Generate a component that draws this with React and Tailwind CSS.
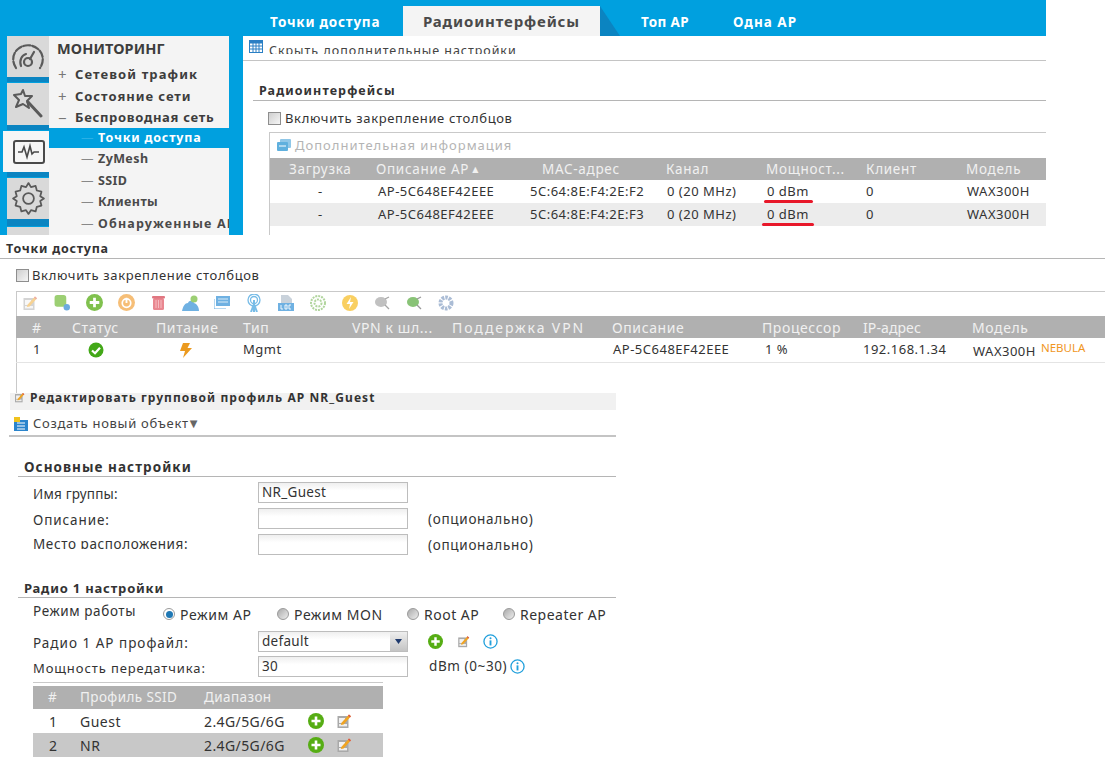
import React from "react";

const Plus = ({ s = 16 }) => (
  <svg width={s} height={s} viewBox="0 0 16 16" className="shrink-0"><circle cx="8" cy="8" r="8" fill="#56ad14" /><path d="M8 3.5v9M3.5 8h9" stroke="#fff" strokeWidth="2.6" /></svg>
);
const Edit = ({ s = 16, muted }) => (
  <svg width={s} height={s} viewBox="0 0 16 16" className="shrink-0" opacity={muted ? 0.65 : 1}><rect x="1.5" y="3" width="11" height="12" fill="#a9a9a9" /><rect x="3" y="11" width="8" height="2.4" fill="#eee" /><rect x="3" y="5" width="6" height="5" fill="#f2f2f2" /><path d="M5.5 9.8 13 1.5l2 1.8-7.4 8.2-2.8.6z" fill="#f0a422" /><path d="M13 1.5l2 1.8-1 1.1-2-1.8z" fill="#d9534f" /></svg>
);
const Info = ({ s = 16 }) => (
  <svg width={s} height={s} viewBox="0 0 16 16" className="shrink-0"><circle cx="8" cy="8" r="7" fill="#fff" stroke="#22a0dc" strokeWidth="1.4" /><circle cx="8" cy="4.6" r="1.1" fill="#22a0dc" /><path d="M8 6.8v5.4" stroke="#22a0dc" strokeWidth="2" /></svg>
);
const GridIcon = () => (
  <svg width="14" height="13" viewBox="0 0 14 13" className="shrink-0"><rect x=".5" y=".5" width="13" height="12" fill="#fff" stroke="#2a7fc4" /><rect x=".5" y=".5" width="13" height="3" fill="#2a7fc4" /><path d="M4 3v9M7 3v9M10 3v9M1 6h12M1 9h12" stroke="#2a7fc4" /></svg>
);
const Check = () => (
  <div className="w-[13px] h-[13px] border border-[#8e8e8e] bg-[linear-gradient(135deg,#cfcfcf,#f6f6f6)] shrink-0" />
);
const Radio = ({ on }) => (
  <span className={`w-[12px] h-[12px] rounded-full border border-[#9a9a9a] shrink-0 flex items-center justify-center ${on ? "bg-white" : "bg-[linear-gradient(135deg,#aaa,#eee)]"}`}>
    {on && <span className="w-[7px] h-[7px] rounded-full bg-[#1f78b4]" />}
  </span>
);

const GaugeI = () => (
  <svg width="34" height="30" viewBox="0 0 34 30" fill="none" stroke="#5a5a5a" strokeWidth="2.2" strokeLinecap="round"><path d="M5 26C1 20 1 12 7 7c6-5 14-5 20 0 6 5 6 13 2 19" strokeDasharray="7 2" /><circle cx="17" cy="20" r="4" /><path d="M19 17l4-7M10 24c-2-6 1-11 5-12" /></svg>
);
const WandI = () => (
  <svg width="30" height="32" viewBox="0 0 30 32" fill="none" stroke="#5a5a5a" strokeWidth="2" strokeLinejoin="round" strokeLinecap="round"><path d="M10 2l2 6 7 0-5 5 2 7-6-4-7 3 3-7-5-5 7-1z" /><path d="M15 14l13 14" strokeWidth="3" /></svg>
);
const PulseI = () => (
  <svg width="32" height="24" viewBox="0 0 32 24" fill="none" stroke="#4a4a4a"><rect x="1" y="1" width="30" height="22" rx="2" strokeWidth="2" /><path d="M5 12h4l2-5 3 10 3-11 2 8 2-2h5" strokeWidth="1.6" /></svg>
);
const GearI = () => (
  <svg width="37" height="37" viewBox="0 0 24 24" fill="none" stroke="#5a5a5a" strokeWidth="1.15" strokeLinejoin="round"><circle cx="12" cy="12" r="3.5" /><path d="M12 2l1.6 2.6 3-.8.8 3 3 .8-.8 3L22 12l-2.4 1.6.8 3-3 .8-.8 3-3-.8L12 22l-1.6-2.4-3 .8-.8-3-3-.8.8-3L2 12l2.4-1.4-.8-3 3-.8.8-3 3 .8z" /></svg>
);

const SideItem = ({ children, active, h = 41, sh = 5 }) => (
  <div className="flex flex-col items-end">
    <div className={`flex items-center justify-center ${active ? "w-[46px] pl-[6px] bg-[#f6f6f6]" : "w-[42px] bg-[#d9d9d9]"}`} style={{ height: h }}>{children}</div>
    <div className="w-[42px] bg-[#0b84c1]" style={{ height: sh }} />
  </div>
);

const MenuRow = ({ sign, children, className = "tracking-[0.45px] h-[21.5px]" }) => (
  <div className={`flex items-center text-[13px] font-bold text-[#3d3d3d] ${className}`}>
    <span className="w-[26px] shrink-0 pl-[9px] text-[#777] font-normal text-[15px] leading-none">{sign}</span>
    <span className="whitespace-nowrap">{children}</span>
  </div>
);
const SubRow = ({ children, active, trk = "tracking-[0.4px]" }) => (
  <div className={`flex items-center text-[12.5px] font-bold whitespace-nowrap ${trk} ${active ? "bg-[#00a0df] text-white h-[20px] pt-[1px]" : "text-[#4a4a4a] h-[21.5px] pt-[2px]"}`}>
    <span className={`w-[49px] shrink-0 pl-[32px] font-normal tracking-[0px] ${active ? "text-[#2ab0e6]" : "text-[#888]"}`}>—</span>
    <span>{children}</span>
  </div>
);

const radioCols = "grid-cols-[106px_166px_124px_100px_100px_100px_81px]";
const accessCols = "grid-cols-[56px_84px_87px_109px_100px_160px_150px_101px_109px_133px]";

const RadioRow = ({ mac, bar, shade }) => (
  <div className={`grid ${radioCols} h-[23px] items-center text-[13px] tracking-[0.5px] text-[#333] ${shade ? "bg-[#ececec]" : "bg-white"}`}>
    <span className="pl-[48px]">-</span>
    <span className="pl-[2px] whitespace-nowrap">AP-5C648EF42EEE</span>
    <span className="ml-[-12px] whitespace-nowrap">{mac}</span>
    <span className="pl-[1px] whitespace-nowrap">0 (20 MHz)</span>
    <span className="relative pl-[1px]">0 dBm<span className={`absolute top-[18px] h-[3px] rounded-full bg-[#e8182a] ${bar}`} /></span>
    <span>0</span>
    <span className="pl-[1px]">WAX300H</span>
  </div>
);

const ToolIcons = () => {
  const wrap = (k, el) => <span key={k} className="shrink-0 flex justify-center w-[32px]">{el}</span>;
  return (
    <div className="flex items-center h-[24px] ml-[-3px] pb-[3px] opacity-75">
      {wrap(1, <Edit s={16} muted />)}
      {wrap(2, <svg width="18" height="17" viewBox="0 0 16 16"><rect x="1" y="1" width="11" height="11" rx="2.5" fill="#7cc045" /><circle cx="12.5" cy="12.5" r="3" fill="#3b8fd6" /></svg>)}
      {wrap(3, <Plus s={17} />)}
      {wrap(4, <svg width="17" height="17" viewBox="0 0 16 16"><circle cx="8" cy="8" r="8" fill="#f3a94a" /><circle cx="8" cy="8.5" r="4" fill="none" stroke="#fff" strokeWidth="1.6" /><path d="M8 3.5v5" stroke="#fff" strokeWidth="1.8" /></svg>)}
      {wrap(5, <svg width="13" height="15" viewBox="0 0 13 15"><rect x="1" y="3" width="11" height="12" rx="1.5" fill="#e2606c" /><rect y="1" width="13" height="2.5" rx="1" fill="#d64a58" /><path d="M4 5v8M6.5 5v8M9 5v8" stroke="#f3a5ad" /></svg>)}
      {wrap(6, <svg width="17" height="16" viewBox="0 0 17 16"><path d="M0 16c1-5 3-8 6-8 1-3 5-3 6 0 3 1 5 4 5 8z" fill="#3f97d9" /><circle cx="12" cy="4" r="3.5" fill="#7cc045" /></svg>)}
      {wrap(7, <svg width="16" height="13" viewBox="0 0 16 13"><rect x="2" width="14" height="10" fill="#3f97d9" /><path d="M0 3v10h12" fill="none" stroke="#3f97d9" /><path d="M4 3h10M4 6h10" stroke="#cfe6f7" /></svg>)}
      {wrap(8, <svg width="14" height="18" viewBox="0 0 14 18" fill="none" stroke="#4aa6e0" strokeWidth="1.3"><circle cx="7" cy="6" r="6" /><circle cx="7" cy="6" r="3.5" /><path d="M7 6v12M4 18l3-8 3 8" strokeWidth="2" /></svg>)}
      {wrap(9, <svg width="16" height="16" viewBox="0 0 16 16"><path d="M3 0h7l4 4v4H3z" fill="#b8c4cf" /><rect y="8" width="16" height="8" fill="#3f97d9" /><path d="M3 10v4h2M7 10h2v4H7zM13 10h-2v4h2" stroke="#fff" fill="none" strokeWidth=".9" /></svg>)}
      {wrap(10, <svg width="16" height="16" viewBox="0 0 16 16" fill="none" stroke="#97c77d" strokeWidth="2" strokeDasharray="2 1"><circle cx="8" cy="8" r="7" /><circle cx="8" cy="8" r="3.5" /></svg>)}
      {wrap(11, <svg width="16" height="16" viewBox="0 0 16 16"><circle cx="8" cy="8" r="8" fill="#f8c02d" /><path d="M9 2 4.5 9H8l-1 5 4.5-7H8z" fill="#fff" /></svg>)}
      {wrap(12, <svg width="15" height="14" viewBox="0 0 15 14"><ellipse cx="6" cy="6" rx="6" ry="5" fill="#adadad" /><path d="M10 9l4 4M10 3l4-2" stroke="#888" strokeWidth="1.3" /></svg>)}
      {wrap(13, <svg width="15" height="14" viewBox="0 0 15 14"><ellipse cx="6" cy="6" rx="6" ry="5" fill="#62b04a" /><path d="M10 9l4 4M10 3l4-2" stroke="#777" strokeWidth="1.3" /></svg>)}
      {wrap(14, <svg width="16" height="16" viewBox="0 0 16 16" fill="none"><circle cx="8" cy="8" r="5.5" stroke="#8ea6c8" strokeWidth="4" strokeDasharray="2.5 1" /></svg>)}
    </div>
  );
};

const Section = ({ children, className = "" }) => (
  <div className={`font-bold text-[#333] whitespace-nowrap border-b border-[#b5b5b5] ${className}`}>{children}</div>
);
const Field = ({ value }) => (
  <div className="w-[150px] h-[21px] border border-[#bdbdbd] bg-[linear-gradient(#efefef,#fff_40%)] px-[3px] text-[13.5px] tracking-[0.3px] leading-[19px] text-[#333] shrink-0">{value}</div>
);
const FormRow = ({ label, children, h = 21, clip, trk = "text-[13.5px] tracking-[0.2px]" }) => (
  <div className="flex items-center pl-[33px]" style={{ height: h }}>
    <span className={`w-[225px] text-[#333] whitespace-nowrap ${trk} ${clip ? "h-[13px] mt-[-4px] overflow-hidden leading-[17px]" : "pt-[4px]"}`}>{label}</span>
    {children}
  </div>
);
const Opt = () => <span className="ml-[20px] pt-[2px] text-[13.5px] text-[#333] tracking-[0.7px]">(опционально)</span>;
const RadioOpt = ({ on, children, className = "" }) => (
  <div className={`flex items-center gap-[5px] text-[14px] text-[#333] whitespace-nowrap ${className}`}><Radio on={on} /><span>{children}</span></div>
);
const SsidRow = ({ n, name, shade }) => (
  <div className={`grid grid-cols-[47px_124px_104px_28px_47px] h-[24px] items-center text-[14px] text-[#333] ${shade ? "bg-[#c8c8c8]" : "bg-white"}`}>
    <span className="pl-[16px]">{n}</span><span className="tracking-[0.5px]">{name}</span><span className="whitespace-nowrap tracking-[0.4px]">2.4G/5G/6G</span>
    <Plus s={16} /><Edit s={16} />
  </div>
);

export default function App() {
  return (
    <div className="w-[1105px] h-[760px] overflow-hidden bg-white font-['Noto_Sans','DejaVu_Sans',sans-serif]">
      {/* Monitor: radio interfaces */}
      <div className="w-[1046px] h-[235px] overflow-hidden bg-[#00a0df] flex flex-col">
        <div className="h-[36px] flex items-end shrink-0 font-bold text-white text-[13.5px]">
          <div className="w-[403px] pl-[270px] h-[30px] leading-[33px] tracking-[0.75px]">Точки доступа</div>
          <div className="w-[197px] h-[30px] bg-[#f4f4f4] text-[#4a4a4a] text-[15px] text-center leading-[30px] tracking-[0.85px]">Радиоинтерфейсы</div>
          <div className="w-[20px] h-[30px] bg-[#0b84c1] [clip-path:polygon(0_0,100%_100%,0_100%)]" />
          <div className="ml-[21px] w-[92px] h-[30px] leading-[33px] tracking-[0.4px]">Топ AP</div>
          <div className="h-[30px] leading-[33px] tracking-[1px]">Одна AP</div>
        </div>
        <div className="flex flex-1 min-h-0">
          <div className="w-[49px] shrink-0 flex flex-col gap-[1px]">
            <SideItem><GaugeI /></SideItem>
            <SideItem h={42}><WandI /></SideItem>
            <SideItem active><PulseI /></SideItem>
            <SideItem sh={7}><GearI /></SideItem>
            <SideItem h={20} sh={0}><span /></SideItem>
          </div>
          <div className="w-[180px] shrink-0 bg-[#f4f4f4] overflow-hidden">
            <div className="h-[29px] pl-[8px] pb-[3px] flex items-center text-[14.5px] font-bold text-[#3d3d3d] tracking-[0.1px]">МОНИТОРИНГ</div>
            <MenuRow sign="+" className="h-[21.5px] pb-[2px] tracking-[1.1px]">Сетевой трафик</MenuRow>
            <MenuRow sign="+" className="h-[21.5px] pb-[2px] tracking-[0.95px]">Состояние сети</MenuRow>
            <MenuRow sign="−" className="h-[20px] tracking-[0.7px]">Беспроводная сеть</MenuRow>
            <SubRow active trk="tracking-[0.8px]">Точки доступа</SubRow>
            <SubRow>ZyMesh</SubRow>
            <SubRow>SSID</SubRow>
            <SubRow>Клиенты</SubRow>
            <SubRow trk="tracking-[1.2px]">Обнаруженные AP</SubRow>
          </div>
          <div className="ml-[14px] flex-1 bg-white min-w-0">
            <div className="h-[25px] border-b border-[#c4c4c4] flex items-start gap-[6px] pl-[6px] pt-[4px] overflow-hidden">
              <GridIcon />
              <span className="text-[12.5px] leading-[22px] h-[14px] overflow-hidden text-[#444] tracking-[0.95px] whitespace-nowrap">Скрыть дополнительные настройки</span>
            </div>
            <div className="mt-[21px] ml-[10px] h-[19px] border-b border-[#b5b5b5] pl-[6px] font-bold text-[12.5px] leading-[17px] text-[#333] tracking-[1.1px]">Радиоинтерфейсы</div>
            <div className="flex items-center gap-[4px] h-[27px] pl-[25px] mt-[4px] text-[13px] text-[#333] tracking-[0.65px]"><Check /><span>Включить закрепление столбцов</span></div>
            <div className="ml-[26px] border-l border-t border-[#c9c9c9] h-[120px]">
              <div className="h-[25px] flex items-center pl-[7px] gap-[4px] text-[13px] text-[#b4b4b4] tracking-[1px]">
                <svg width="14" height="13" viewBox="0 0 14 13"><rect x="3" y="0" width="11" height="9" rx="1" fill="#8fc7e8" /><rect x="0" y="3" width="11" height="9" rx="1" fill="#5fb0de" /><path d="M2 7h7" stroke="#fff" /></svg>
                <span>Дополнительная информация</span>
              </div>
              <div className={`grid ${radioCols} h-[22px] items-center bg-[#b0b0b0] text-[13.5px] text-[#f1f1f1] tracking-[0.7px] whitespace-nowrap`}>
                <span className="pl-[19px]">Загрузка</span>
                <span className="flex items-center gap-[3px]">Описание AP<span className="text-[8px]">▲</span></span>
                <span>MAC-адрес</span><span>Канал</span><span>Мощност...</span><span>Клиент</span><span>Модель</span>
              </div>
              <RadioRow mac="5C:64:8E:F4:2E:F2" bar="left-[-2px] w-[49px]" />
              <RadioRow mac="5C:64:8E:F4:2E:F3" bar="left-[-4px] w-[52px]" shade />
            </div>
          </div>
        </div>
      </div>

      {/* Access points */}
      <div className="h-[158px] pt-[6px] overflow-hidden">
        <Section className="h-[18px] pl-[6px] leading-[15px] text-[12.5px] tracking-[0.75px]">Точки доступа</Section>
        <div className="flex items-center gap-[3px] h-[25px] pl-[16px] mt-[4px] text-[13px] text-[#333] tracking-[0.65px]"><Check /><span>Включить закрепление столбцов</span></div>
        <div className="ml-[16px] mt-[3px] border-l border-t border-[#c9c9c9] h-[110px]">
          <ToolIcons />
          <div className={`grid ${accessCols} ml-[-1px] h-[22px] items-center bg-[#b0b0b0] text-[14px] text-[#f1f1f1] tracking-[0.6px] whitespace-nowrap`}>
            <span className="pl-[16px]">#</span><span>Статус</span><span>Питание</span><span>Тип</span><span>VPN к шл...</span><span className="tracking-[1.9px]">Поддержка VPN</span><span>Описание</span><span>Процессор</span><span className="tracking-[0.1px]">IP-адрес</span><span>Модель</span>
          </div>
          <div className={`grid ${accessCols} ml-[-1px] h-[25px] items-center border-b border-[#e4e4e4] text-[13px] tracking-[0.5px] text-[#333] whitespace-nowrap`}>
            <span className="pl-[17px]">1</span>
            <span className="pl-[16px]"><svg width="16" height="16" viewBox="0 0 16 16"><circle cx="8" cy="8" r="7.5" fill="#43a818" /><path d="M4 8.5l3 2.8 5-5.6" fill="none" stroke="#fff" strokeWidth="2.2" /></svg></span>
            <span className="pl-[24px]"><svg width="12" height="15" viewBox="0 0 12 15"><path d="M3 0h7L7.5 5H12L3 15l2-7H0z" fill="#eb9a1f" /></svg></span>
            <span>Mgmt</span><span /><span />
            <span className="pl-[1px]">AP-5C648EF42EEE</span><span className="pl-[3px]">1 %</span><span>192.168.1.34</span>
            <span className="flex items-start"><span className="pt-[3px] pl-[1px]">WAX300H</span><span className="text-[11.5px] tracking-[0px] text-[#f0961e] ml-[5px]">NEBULA</span></span>
          </div>
        </div>
      </div>

      {/* Edit group profile */}
      <div className="w-[616px]">
        <div className="ml-[10px] h-[17px] bg-[#f1f1f1] flex items-center gap-[5px] pl-[4px] pb-[8px] font-bold text-[12px] text-[#333] tracking-[1.07px] whitespace-nowrap">
          <Edit s={11} /><span>Редактировать групповой профиль AP NR_Guest</span>
        </div>
        <div className="ml-[9px] h-[27px] pt-[2px] border-b-2 border-[#c4c4c4] flex items-center pl-[5px] gap-[5px] text-[13px] text-[#444] tracking-[0.7px]">
          <svg width="14" height="14" viewBox="0 0 14 14"><rect y="3" width="14" height="11" fill="#2a84cc" /><path d="M3 6h8M3 9h8M3 12h8" stroke="#fff" /><rect width="6" height="5" fill="#f0c21d" /></svg>
          <span>Создать новый объект</span><span className="text-[10px] text-[#666] ml-[-4px]">▼</span>
        </div>
        <Section className="ml-[18px] mt-[23px] h-[17px] pl-[6px] leading-[15px] text-[13.5px] tracking-[1.05px]">Основные настройки</Section>
        <div className="mt-[5px]">
          <FormRow label="Имя группы:"><Field value="NR_Guest" /></FormRow>
          <div className="h-[5px]" />
          <FormRow label="Описание:" trk="text-[13.5px] tracking-[0.9px]"><Field /><Opt /></FormRow>
          <div className="h-[5px]" />
          <FormRow label="Место расположения:" clip trk="text-[13.5px] tracking-[0.6px]"><Field /><Opt /></FormRow>
        </div>
        <Section className="ml-[18px] mt-[26px] h-[17px] pl-[6px] leading-[15px] text-[13px] tracking-[0.8px]">Радио 1 настройки</Section>
        <div className="flex items-center h-[30px] pl-[33px] pt-[2px]">
          <span className="w-[130px] text-[13.5px] text-[#333] tracking-[0.6px] mt-[-5px]">Режим работы</span>
          <RadioOpt on className="w-[114px] tracking-[0.6px]">Режим AP</RadioOpt>
          <RadioOpt className="w-[130px] tracking-[0.55px]">Режим MON</RadioOpt>
          <RadioOpt className="w-[96px] tracking-[0.5px]">Root AP</RadioOpt>
          <RadioOpt className="tracking-[0.5px]">Repeater AP</RadioOpt>
        </div>
        <div className="mt-[3px]">
          <FormRow label="Радио 1 AP профайл:" trk="text-[13.5px] tracking-[1px]">
            <div className="w-[150px] h-[21px] border border-[#bdbdbd] flex text-[13.5px] tracking-[0.3px] leading-[19px] text-[#333] bg-[linear-gradient(#efefef,#fff_40%)]">
              <span className="flex-1 px-[3px]">default</span>
              <span className="w-[17px] bg-[linear-gradient(#eee,#c4c4c4)] flex items-center justify-center"><svg width="7" height="5" viewBox="0 0 7 5"><path d="M0 0h7L3.5 5z" fill="#1f3a6e" /></svg></span>
            </div>
            <span className="ml-[20px]"><Plus s={15} /></span>
            <span className="ml-[14px]"><Edit s={13} /></span>
            <span className="ml-[13px]"><Info s={15} /></span>
          </FormRow>
          <div className="h-[4px]" />
          <FormRow label="Мощность передатчика:" trk="text-[13px] tracking-[0.9px]">
            <Field value="30" />
            <span className="ml-[21px] text-[13.5px] text-[#333] tracking-[0.6px] whitespace-nowrap">dBm (0~30)</span>
            <span className="ml-[3px]"><Info s={15} /></span>
          </FormRow>
        </div>
        <div className="ml-[33px] mt-[5px] w-[350px] border-t border-[#c9c9c9] pt-[3px]">
          <div className="grid grid-cols-[47px_124px_179px] h-[23px] items-center bg-[#b0b0b0] text-[13.5px] text-[#f1f1f1] tracking-[0.4px]">
            <span className="pl-[15px]">#</span><span>Профиль SSID</span><span>Диапазон</span>
          </div>
          <SsidRow n="1" name="Guest" />
          <SsidRow n="2" name="NR" shade />
        </div>
      </div>
    </div>
  );
}
